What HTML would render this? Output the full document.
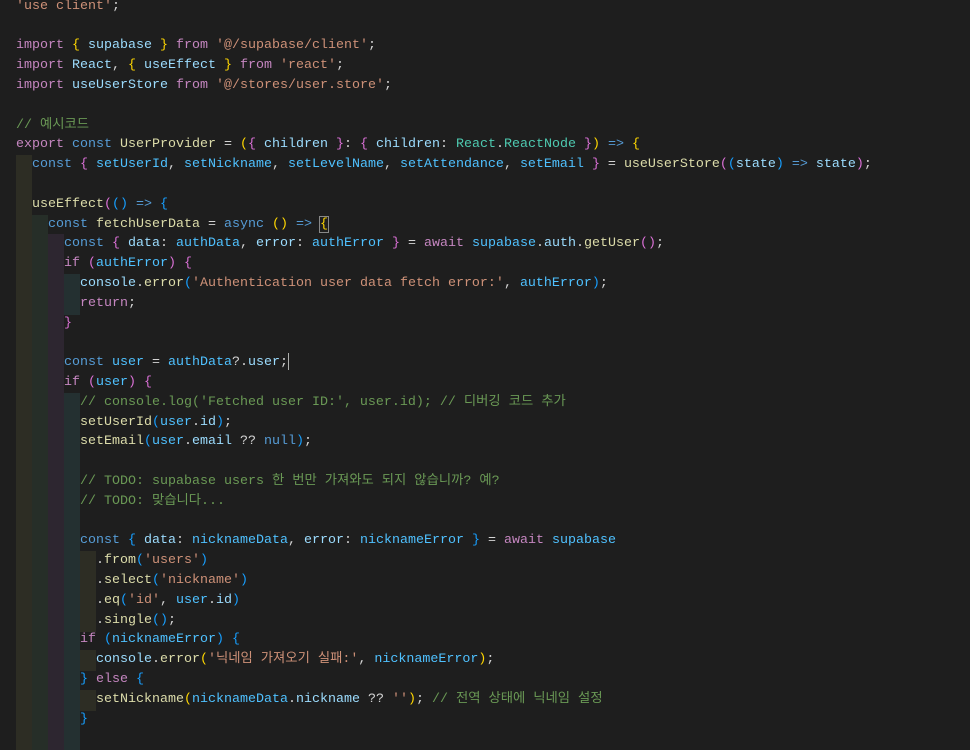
<!DOCTYPE html>
<html><head><meta charset="utf-8"><style>
body{margin:0;background:#1e1e1e;width:970px;height:736px;overflow:hidden;position:relative;font-family:"Liberation Mono","Noto Sans CJK KR",monospace;font-size:13.33px;color:#d4d4d4}
.l{position:absolute;left:0;height:19.8px;line-height:19.8px;white-space:pre;width:970px}
.t{position:absolute;left:16px;top:0}
.g{position:absolute;top:0;height:21px;width:16px}
.g1{background:#2d2d24}.g2{background:#262e28}.g3{background:#2d2630}.g4{background:#243031}
.k{color:#569cd6}.c{color:#c586c0}.v{color:#9cdcfe}.f{color:#dcdcaa}.s{color:#ce9178}.m{color:#6a9955}.ty{color:#4ec9b0}.n{color:#4fc1ff}
.b1{color:#ffd700}.b2{color:#da70d6}.b3{color:#179fff}
.cur{display:inline-block;width:1px;height:17px;background:#aeafad;vertical-align:middle}
</style></head><body>
<script>
const L=[
[0,`<span class="s">'use client'</span>;`],
[0,``],
[0,`<span class="c">import</span> <span class="b1">{</span> <span class="v">supabase</span> <span class="b1">}</span> <span class="c">from</span> <span class="s">'@/supabase/client'</span>;`],
[0,`<span class="c">import</span> <span class="v">React</span>, <span class="b1">{</span> <span class="v">useEffect</span> <span class="b1">}</span> <span class="c">from</span> <span class="s">'react'</span>;`],
[0,`<span class="c">import</span> <span class="v">useUserStore</span> <span class="c">from</span> <span class="s">'@/stores/user.store'</span>;`],
[0,``],
[0,`<span class="m">// 예시코드</span>`],
[0,`<span class="c">export</span> <span class="k">const</span> <span class="f">UserProvider</span> = <span class="b1">(</span><span class="b2">{</span> <span class="v">children</span> <span class="b2">}</span>: <span class="b2">{</span> <span class="v">children</span>: <span class="ty">React</span>.<span class="ty">ReactNode</span> <span class="b2">}</span><span class="b1">)</span> <span class="k">=&gt;</span> <span class="b1">{</span>`],
[1,`<span class="k">const</span> <span class="b2">{</span> <span class="n">setUserId</span>, <span class="n">setNickname</span>, <span class="n">setLevelName</span>, <span class="n">setAttendance</span>, <span class="n">setEmail</span> <span class="b2">}</span> = <span class="f">useUserStore</span><span class="b2">(</span><span class="b3">(</span><span class="v">state</span><span class="b3">)</span> <span class="k">=&gt;</span> <span class="v">state</span><span class="b2">)</span>;`],
[0,``],
[1,`<span class="f">useEffect</span><span class="b2">(</span><span class="b3">()</span> <span class="k">=&gt;</span> <span class="b3">{</span>`],
[2,`<span class="k">const</span> <span class="f">fetchUserData</span> = <span class="k">async</span> <span class="b1">()</span> <span class="k">=&gt;</span> <span class="b1" style="outline:1px solid #888">{</span>`],
[3,`<span class="k">const</span> <span class="b2">{</span> <span class="v">data</span>: <span class="n">authData</span>, <span class="v">error</span>: <span class="n">authError</span> <span class="b2">}</span> = <span class="c">await</span> <span class="n">supabase</span>.<span class="v">auth</span>.<span class="f">getUser</span><span class="b2">()</span>;`],
[3,`<span class="c">if</span> <span class="b2">(</span><span class="n">authError</span><span class="b2">)</span> <span class="b2">{</span>`],
[4,`<span class="v">console</span>.<span class="f">error</span><span class="b3">(</span><span class="s">'Authentication user data fetch error:'</span>, <span class="n">authError</span><span class="b3">)</span>;`],
[4,`<span class="c">return</span>;`],
[3,`<span class="b2">}</span>`],
[0,``],
[3,`<span class="k">const</span> <span class="n">user</span> = <span class="n">authData</span>?.<span class="v">user</span>;<span class="cur"></span>`],
[3,`<span class="c">if</span> <span class="b2">(</span><span class="n">user</span><span class="b2">)</span> <span class="b2">{</span>`],
[4,`<span class="m">// console.log('Fetched user ID:', user.id); // 디버깅 코드 추가</span>`],
[4,`<span class="f">setUserId</span><span class="b3">(</span><span class="n">user</span>.<span class="v">id</span><span class="b3">)</span>;`],
[4,`<span class="f">setEmail</span><span class="b3">(</span><span class="n">user</span>.<span class="v">email</span> ?? <span class="k">null</span><span class="b3">)</span>;`],
[0,``],
[4,`<span class="m">// TODO: supabase users 한 번만 가져와도 되지 않습니까? 예?</span>`],
[4,`<span class="m">// TODO: 맞습니다...</span>`],
[0,``],
[4,`<span class="k">const</span> <span class="b3">{</span> <span class="v">data</span>: <span class="n">nicknameData</span>, <span class="v">error</span>: <span class="n">nicknameError</span> <span class="b3">}</span> = <span class="c">await</span> <span class="n">supabase</span>`],
[5,`.<span class="f">from</span><span class="b3">(</span><span class="s">'users'</span><span class="b3">)</span>`],
[5,`.<span class="f">select</span><span class="b3">(</span><span class="s">'nickname'</span><span class="b3">)</span>`],
[5,`.<span class="f">eq</span><span class="b3">(</span><span class="s">'id'</span>, <span class="n">user</span>.<span class="v">id</span><span class="b3">)</span>`],
[5,`.<span class="f">single</span><span class="b3">()</span>;`],
[4,`<span class="c">if</span> <span class="b3">(</span><span class="n">nicknameError</span><span class="b3">)</span> <span class="b3">{</span>`],
[5,`<span class="v">console</span>.<span class="f">error</span><span class="b1">(</span><span class="s">'닉네임 가져오기 실패:'</span>, <span class="n">nicknameError</span><span class="b1">)</span>;`],
[4,`<span class="b3">}</span> <span class="c">else</span> <span class="b3">{</span>`],
[5,`<span class="f">setNickname</span><span class="b1">(</span><span class="n">nicknameData</span>.<span class="v">nickname</span> ?? <span class="s">''</span><span class="b1">)</span>; <span class="m">// 전역 상태에 닉네임 설정</span>`],
[4,`<span class="b3">}</span>`],
[4,``]
];
let h='';
const fill=[0,0,0,0,0,0,0,0,1,1,1,2,3,3,4,4,3,3,3,3,4,4,4,4,4,4,4,4,5,5,5,5,4,5,4,5,4,4];
L.forEach((x,i)=>{
 const lvl=x[1]===''?fill[i]:x[0];
 let g='';
 for(let j=0;j<lvl;j++){g+=`<div class="g g${(j%4)+1}" style="left:${16+16*j}px"></div>`;}
 h+=`<div class="l" style="top:${(-3.3+19.8*i).toFixed(2)}px">${g}<span class="t" style="left:${16+16*x[0]}px">${x[1]}</span></div>`;
});
document.write(h);
</script>
</body></html>
